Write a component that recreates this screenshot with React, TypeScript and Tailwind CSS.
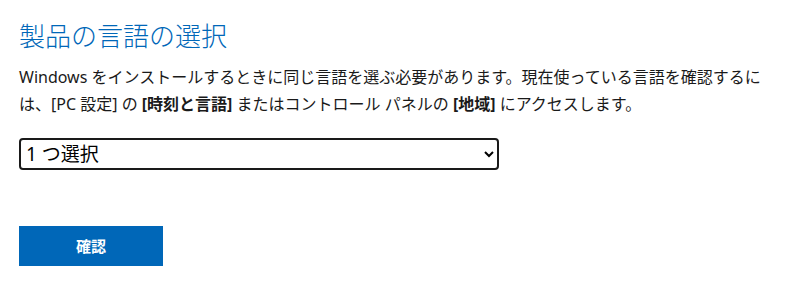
export default function App() {
  return (
    <div
      className="min-h-screen bg-white px-[19px] pt-[19px] text-black"
      style={{ fontFamily: '"Noto Sans", "Noto Sans CJK JP", sans-serif' }}
    >
      <h1 className="text-[26px] leading-[34px] font-light text-[#0067b8]">製品の言語の選択</h1>

      <p className="mt-[11px] text-[16px] leading-[27px] text-[#1a1a1a]">
        Windows をインストールするときに同じ言語を選ぶ必要があります。現在使っている言語を確認するに
        <br />
        は、[PC 設定] の <b className="font-bold">[時刻と言語]</b> またはコントロール パネルの{" "}
        <b className="font-bold">[地域]</b> にアクセスします。
      </p>

      <select
        defaultValue=""
        className="mt-[20px] block h-[32px] w-[480px] rounded-[4px] border-2 border-[#1a1a1a] bg-white pl-[1px] text-[19px] leading-none text-black"
      >
        <option value="">1 つ選択</option>
        <option value="ja">日本語</option>
        <option value="en">英語</option>
      </select>

      <button className="mt-[56px] h-[40px] w-[144px] bg-[#0067b8] text-[15px] font-bold text-white">
        確認
      </button>
    </div>
  );
}
